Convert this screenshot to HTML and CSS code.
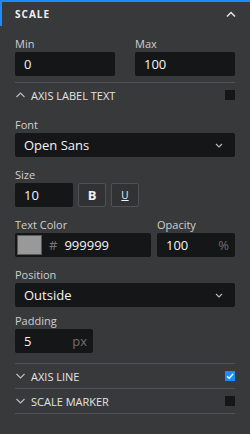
FILE: index.html
```html
<!DOCTYPE html>
<html lang="en">
<head>
    <meta charset="UTF-8">
    <meta name="viewport" content="width=device-width, initial-scale=1.0">
    <title>Scale</title>
    <link rel="stylesheet" href="styles.css">
</head>
<body>
    <div class="panel">
        <div class="panel-header">
            <span class="panel-title">SCALE</span>
            <svg class="chev-up" width="10" height="7" viewBox="0 0 10 7"><path d="M1 5.5L5 1.5L9 5.5" fill="none" stroke="#e6e6e6" stroke-width="1.5"/></svg>
        </div>
        <div class="panel-body">
            <div class="row">
                <div class="field wide">
                    <label>Min</label>
                    <div class="input">0</div>
                </div>
                <div class="field wide">
                    <label>Max</label>
                    <div class="input">100</div>
                </div>
            </div>

            <div class="section">
                <div class="section-row">
                    <svg class="chev" width="9" height="6" viewBox="0 0 9 6"><path d="M0.5 5L4.5 1L8.5 5" fill="none" stroke="#bbb" stroke-width="1.2"/></svg>
                    <span class="section-title">AXIS LABEL TEXT</span>
                    <span class="checkbox"></span>
                </div>
                <div class="section-content">
                    <div class="field">
                        <label>Font</label>
                        <div class="input select">Open Sans
                            <svg width="8" height="5" viewBox="0 0 8 5"><path d="M1 1L4 4L7 1" fill="none" stroke="#bbb" stroke-width="1.1"/></svg>
                        </div>
                    </div>
                    <div class="field">
                        <label>Size</label>
                        <div class="size-row">
                            <div class="input size">10</div>
                            <div class="btn bold">B</div>
                            <div class="btn underline">U</div>
                        </div>
                    </div>
                    <div class="row tight">
                        <div class="field color-field">
                            <label>Text Color</label>
                            <div class="input color">
                                <span class="swatch"></span>
                                <span class="hash">#</span>999999
                            </div>
                        </div>
                        <div class="field small">
                            <label>Opacity</label>
                            <div class="input unit">100 <span class="unit-label">%</span></div>
                        </div>
                    </div>
                    <div class="field">
                        <label>Position</label>
                        <div class="input select">Outside
                            <svg width="8" height="5" viewBox="0 0 8 5"><path d="M1 1L4 4L7 1" fill="none" stroke="#bbb" stroke-width="1.1"/></svg>
                        </div>
                    </div>
                    <div class="field small padding-field">
                        <label>Padding</label>
                        <div class="input unit">5 <span class="unit-label">px</span></div>
                    </div>
                </div>
            </div>

            <div class="section">
                <div class="section-row">
                    <svg class="chev" width="9" height="6" viewBox="0 0 9 6"><path d="M0.5 1L4.5 5L8.5 1" fill="none" stroke="#bbb" stroke-width="1.2"/></svg>
                    <span class="section-title">AXIS LINE</span>
                    <span class="checkbox checked">
                        <svg width="10" height="10" viewBox="0 0 10 10"><path d="M2 5.2L4.2 7.2L8.2 2.8" fill="none" stroke="#fff" stroke-width="1.4"/></svg>
                    </span>
                </div>
            </div>
            <div class="section last">
                <div class="section-row">
                    <svg class="chev" width="9" height="6" viewBox="0 0 9 6"><path d="M0.5 1L4.5 5L8.5 1" fill="none" stroke="#bbb" stroke-width="1.2"/></svg>
                    <span class="section-title">SCALE MARKER</span>
                    <span class="checkbox"></span>
                </div>
            </div>
        </div>
    </div>
</body>
</html>
```

FILE: styles.css
```css
body {
    margin: 0;
    background: #38393b;
    font-family: 'Open Sans', 'Noto Sans', sans-serif;
    color: #d4d4d4;
}
.panel {
    border-top: 2px solid #1a8cff;
    min-height: 432px;
    background: #38393b;
}
.panel-header {
    height: 24px;
    border-left: 2px solid #1a8cff;
    padding: 0 14px 0 13px;
    display: flex;
    align-items: center;
    justify-content: space-between;
}
.panel-title {
    font-size: 10px;
    font-weight: 700;
    letter-spacing: 1px;
    color: #f2f2f2;
}
.panel-body {
    padding: 10px 15px 0 15px;
}
.row {
    display: flex;
    gap: 20px;
    margin-bottom: 6px;
}
.row.tight {
    gap: 6px;
    margin-bottom: 0;
}
.field {
    display: flex;
    flex-direction: column;
}
.field.wide {
    width: 100px;
}
.field.color-field {
    width: 136px;
}
.field.small {
    width: 78px;
}
.padding-field {
    margin-top: -4px;
}
label {
    font-size: 11px;
    line-height: 15px;
    margin-bottom: 1px;
    color: #cfcfcf;
}
.input {
    height: 24px;
    background: #151618;
    border-radius: 2px;
    padding: 0 9px;
    display: flex;
    align-items: center;
    font-size: 13px;
    color: #f4f4f4;
    box-sizing: border-box;
}
.select {
    justify-content: space-between;
    padding-right: 12px;
}
.size-row {
    display: flex;
    gap: 5px;
}
.input.size {
    width: 58px;
}
.btn {
    width: 28px;
    height: 24px;
    box-sizing: border-box;
    border: 1px solid #505154;
    border-radius: 2px;
    background: #313234;
    display: flex;
    align-items: center;
    justify-content: center;
    color: #f2f2f2;
}
.btn.bold {
    font-weight: 700;
    font-size: 13px;
}
.btn.underline {
    font-size: 10px;
    text-decoration: underline;
}
.input.color {
    padding-left: 2px;
}
.swatch {
    width: 25px;
    height: 20px;
    box-sizing: border-box;
    background: #999999;
    border: 1px solid #5a5a5a;
    margin-right: 7px;
}
.hash {
    color: #777;
    margin-right: 7px;
}
.unit {
    justify-content: space-between;
    padding-right: 6px;
}
.unit-label {
    color: #707070;
}
.section {
    border-top: 1px solid #515255;
}
.section.last {
    border-bottom: 1px solid #515255;
}
.section-row {
    height: 24px;
    display: flex;
    align-items: center;
}
.chev {
    margin: 0 6px 0 1px;
}
.section-title {
    font-size: 11px;
    color: #e4e4e4;
    flex: 1;
}
.checkbox {
    width: 10px;
    height: 10px;
    background: #151618;
    display: flex;
}
.checkbox.checked {
    background: #1a8cff;
}
.section-content {
    padding: 10px 0;
    display: flex;
    flex-direction: column;
    gap: 10px;
}
```
